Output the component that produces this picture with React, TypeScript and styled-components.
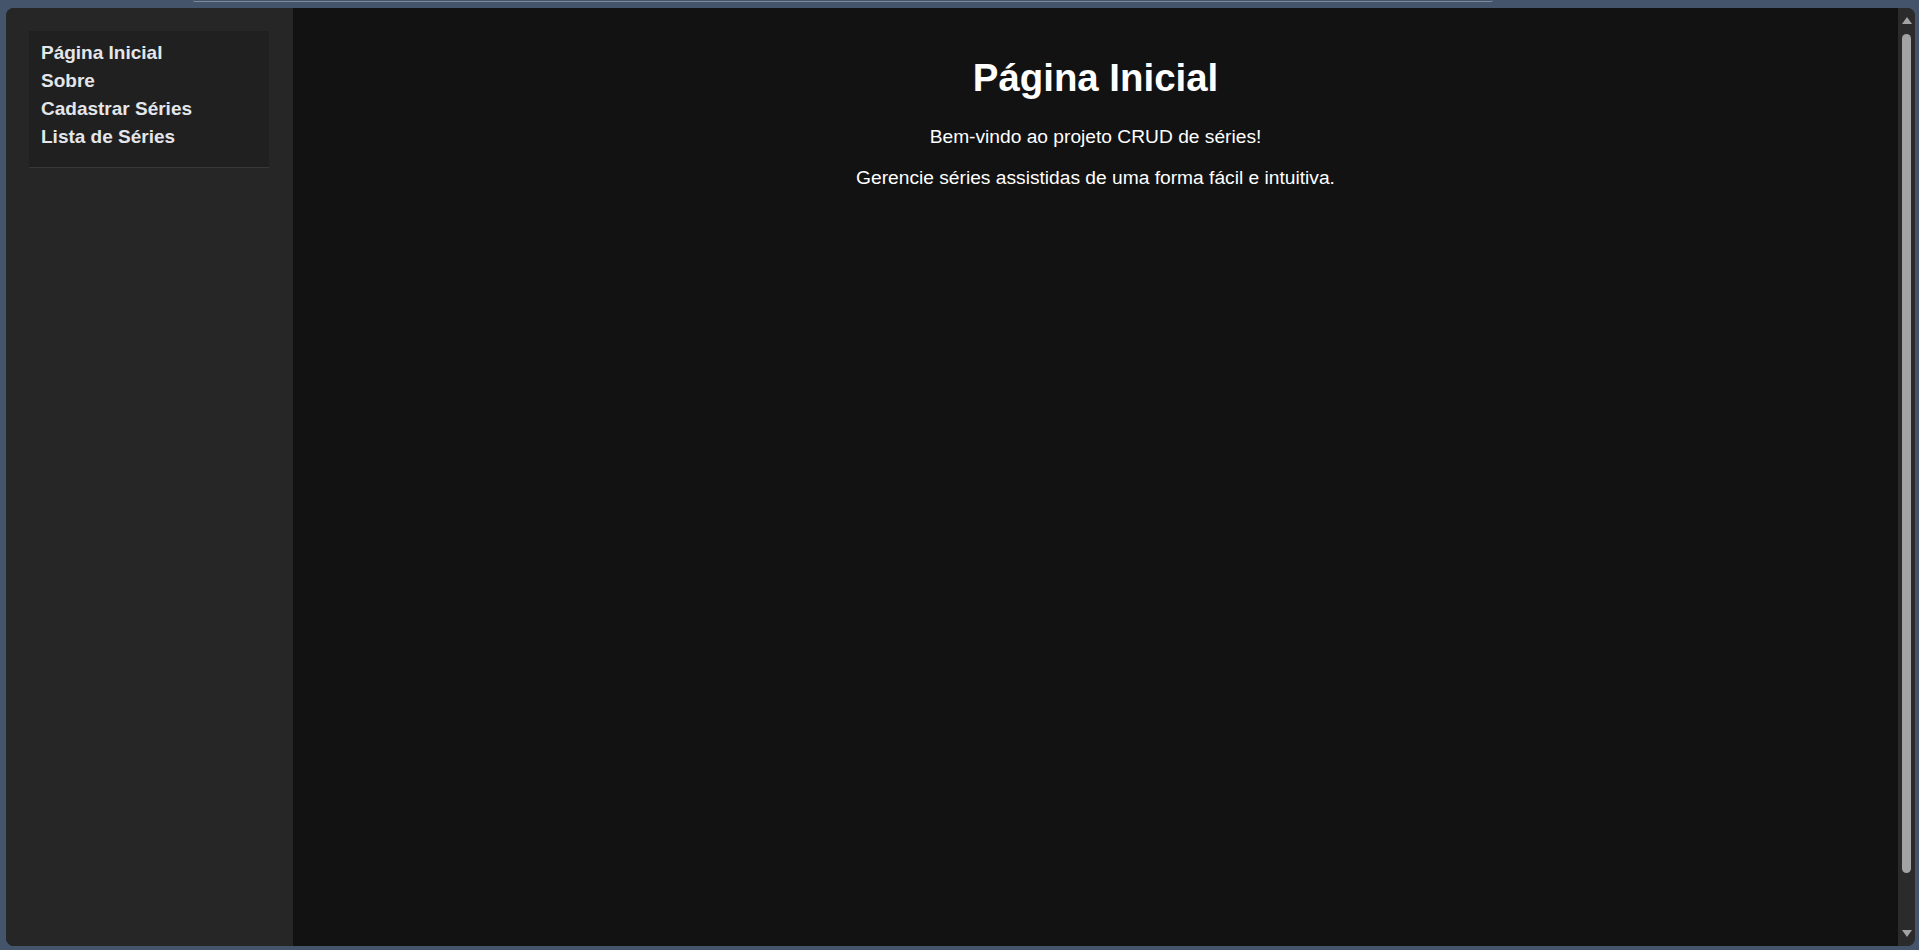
import React from "react";
import styled, { createGlobalStyle } from "styled-components";

const GlobalStyle = createGlobalStyle`
  html, body {
    margin: 0;
    padding: 0;
    height: 100%;
    background: #44546a;
    overflow: hidden;
  }
  body {
    font-family: "Liberation Sans", Arial, sans-serif;
  }
  #root {
    height: 100%;
  }
`;

const Desktop = styled.div`
  height: 950px;
  display: flex;
  flex-direction: column;
  box-sizing: border-box;
  padding: 0 4px 4px 6px;
`;

const AddressEdge = styled.div`
  height: 2px;
  margin: 0 422px 0 187px;
  box-sizing: border-box;
  border-bottom: 1px solid #7f8b9b;
  border-radius: 0 0 6px 6px;
`;

const Window = styled.div`
  margin-top: 6px;
  flex: 1;
  display: flex;
  border-radius: 8px;
  overflow: hidden;
  background: #262626;
`;

const Sidebar = styled.aside`
  width: 287px;
  flex-shrink: 0;
  box-sizing: border-box;
  padding: 23px 24px 0 23px;
  background: #262626;
`;

const Nav = styled.nav`
  background: #202020;
  border-bottom: 1px solid #383838;
  padding: 12px 12px 12px;
`;

const NavList = styled.ul`
  list-style: none;
  margin: 0;
  padding: 0;
`;

const NavItem = styled.li`
  margin: 0 0 8px;
  font-size: 19px;
  line-height: 20px;
`;

const NavLink = styled.a`
  color: #e3e6ea;
  font-weight: 700;
  text-decoration: none;
  cursor: pointer;
`;

const Main = styled.main`
  flex: 1;
  background: #121212;
  color: #ffffff;
  text-align: center;
  padding-top: 48px;
`;

const Title = styled.h1`
  margin: 0 0 26px;
  font-size: 38.4px;
  font-weight: 700;
  line-height: 44px;
`;

const Text = styled.p`
  margin: 0 0 19px;
  font-size: 19.2px;
  line-height: 22px;
`;

const ScrollTrack = styled.div`
  width: 17px;
  flex-shrink: 0;
  background: #2b2b2b;
  display: flex;
  flex-direction: column;
  align-items: center;
  padding: 9px 0 9px;
  box-sizing: border-box;
`;

const Arrow = styled.div<{ $down?: boolean }>`
  width: 0;
  height: 0;
  border-left: 5px solid transparent;
  border-right: 5px solid transparent;
  ${(p) =>
    p.$down
      ? "border-top: 7px solid #a3a3a3;"
      : "border-bottom: 7px solid #a3a3a3;"}
`;

const Thumb = styled.div`
  width: 9px;
  margin: 10px 0 auto;
  height: 839px;
  border-radius: 5px;
  background: #a3a3a3;
`;

export default function App() {
  const links = ["Página Inicial", "Sobre", "Cadastrar Séries", "Lista de Séries"];
  return (
    <>
      <GlobalStyle />
      <Desktop>
        <AddressEdge />
        <Window>
          <Sidebar>
            <Nav>
              <NavList>
                {links.map((l) => (
                  <NavItem key={l}>
                    <NavLink>{l}</NavLink>
                  </NavItem>
                ))}
              </NavList>
            </Nav>
          </Sidebar>
          <Main>
            <Title>Página Inicial</Title>
            <Text>Bem-vindo ao projeto CRUD de séries!</Text>
            <Text>Gerencie séries assistidas de uma forma fácil e intuitiva.</Text>
          </Main>
          <ScrollTrack>
            <Arrow />
            <Thumb />
            <Arrow $down />
          </ScrollTrack>
        </Window>
      </Desktop>
    </>
  );
}
